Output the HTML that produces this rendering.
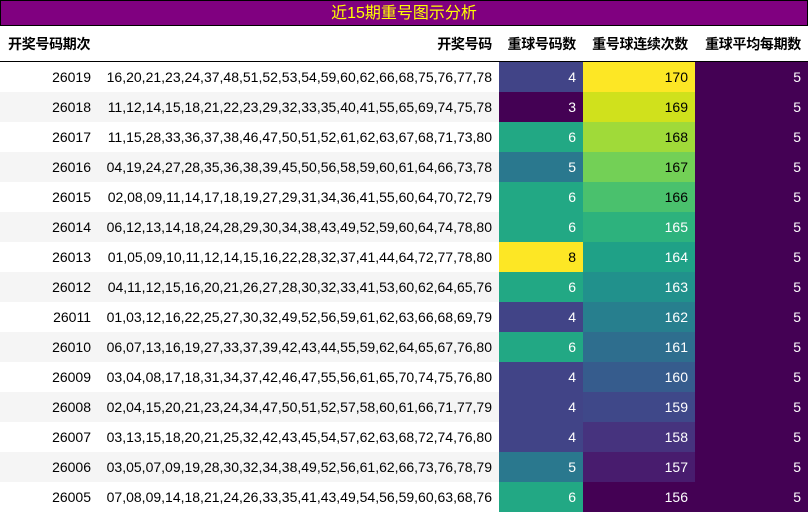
<!DOCTYPE html>
<html><head><meta charset="utf-8"><style>
body{margin:0;width:808px;height:513px;overflow:hidden;background:#fff;font-family:"Liberation Sans","Noto Sans CJK SC",sans-serif;font-size:14px}
.t{position:absolute;left:0;top:0;width:806px;height:24px;background:#800080;border:1px solid #000;color:#ffff00;font-size:16px;text-align:center;line-height:25px}
table{position:absolute;left:0;top:26px;border-collapse:collapse;width:808px;table-layout:fixed}
th{height:35px;font-weight:bold;padding:0 7px 0 0;text-align:right;border-bottom:1px solid #000;white-space:nowrap;overflow:hidden;font-size:14px;letter-spacing:-0.3px}
th:first-child{text-align:left;padding-left:8px}
td{height:30px;padding:0 7px 0 0;text-align:right;white-space:nowrap;overflow:hidden}
tr:nth-child(odd) td{background:#f5f5f5}
tr:nth-child(even) td{background:#fff}
.w{color:#fff}.k{color:#000}
</style></head><body>
<div class="t">近15期重号图示分析</div>
<table>
<colgroup><col style="width:98px"><col style="width:401px"><col style="width:84px"><col style="width:112px"><col style="width:113px"></colgroup>
<tr><th>开奖号码期次</th><th>开奖号码</th><th>重球号码数</th><th>重号球连续次数</th><th>重球平均每期数</th></tr>
<tr><td>26019</td><td>16,20,21,23,24,37,48,51,52,53,54,59,60,62,66,68,75,76,77,78</td><td class="w" style="background:#414487!important">4</td><td class="k" style="background:#fde725!important">170</td><td class="w" style="background:#440154!important">5</td></tr>
<tr><td>26018</td><td>11,12,14,15,18,21,22,23,29,32,33,35,40,41,55,65,69,74,75,78</td><td class="w" style="background:#440154!important">3</td><td class="k" style="background:#d0e11c!important">169</td><td class="w" style="background:#440154!important">5</td></tr>
<tr><td>26017</td><td>11,15,28,33,36,37,38,46,47,50,51,52,61,62,63,67,68,71,73,80</td><td class="w" style="background:#22a884!important">6</td><td class="k" style="background:#a0da39!important">168</td><td class="w" style="background:#440154!important">5</td></tr>
<tr><td>26016</td><td>04,19,24,27,28,35,36,38,39,45,50,56,58,59,60,61,64,66,73,78</td><td class="w" style="background:#2a788e!important">5</td><td class="k" style="background:#73d056!important">167</td><td class="w" style="background:#440154!important">5</td></tr>
<tr><td>26015</td><td>02,08,09,11,14,17,18,19,27,29,31,34,36,41,55,60,64,70,72,79</td><td class="w" style="background:#22a884!important">6</td><td class="k" style="background:#4ac16d!important">166</td><td class="w" style="background:#440154!important">5</td></tr>
<tr><td>26014</td><td>06,12,13,14,18,24,28,29,30,34,38,43,49,52,59,60,64,74,78,80</td><td class="w" style="background:#22a884!important">6</td><td class="w" style="background:#2db27d!important">165</td><td class="w" style="background:#440154!important">5</td></tr>
<tr><td>26013</td><td>01,05,09,10,11,12,14,15,16,22,28,32,37,41,44,64,72,77,78,80</td><td class="k" style="background:#fde725!important">8</td><td class="w" style="background:#1fa187!important">164</td><td class="w" style="background:#440154!important">5</td></tr>
<tr><td>26012</td><td>04,11,12,15,16,20,21,26,27,28,30,32,33,41,53,60,62,64,65,76</td><td class="w" style="background:#22a884!important">6</td><td class="w" style="background:#21918c!important">163</td><td class="w" style="background:#440154!important">5</td></tr>
<tr><td>26011</td><td>01,03,12,16,22,25,27,30,32,49,52,56,59,61,62,63,66,68,69,79</td><td class="w" style="background:#414487!important">4</td><td class="w" style="background:#277f8e!important">162</td><td class="w" style="background:#440154!important">5</td></tr>
<tr><td>26010</td><td>06,07,13,16,19,27,33,37,39,42,43,44,55,59,62,64,65,67,76,80</td><td class="w" style="background:#22a884!important">6</td><td class="w" style="background:#2e6e8e!important">161</td><td class="w" style="background:#440154!important">5</td></tr>
<tr><td>26009</td><td>03,04,08,17,18,31,34,37,42,46,47,55,56,61,65,70,74,75,76,80</td><td class="w" style="background:#414487!important">4</td><td class="w" style="background:#365c8d!important">160</td><td class="w" style="background:#440154!important">5</td></tr>
<tr><td>26008</td><td>02,04,15,20,21,23,24,34,47,50,51,52,57,58,60,61,66,71,77,79</td><td class="w" style="background:#414487!important">4</td><td class="w" style="background:#3f4889!important">159</td><td class="w" style="background:#440154!important">5</td></tr>
<tr><td>26007</td><td>03,13,15,18,20,21,25,32,42,43,45,54,57,62,63,68,72,74,76,80</td><td class="w" style="background:#414487!important">4</td><td class="w" style="background:#46337e!important">158</td><td class="w" style="background:#440154!important">5</td></tr>
<tr><td>26006</td><td>03,05,07,09,19,28,30,32,34,38,49,52,56,61,62,66,73,76,78,79</td><td class="w" style="background:#2a788e!important">5</td><td class="w" style="background:#481c6e!important">157</td><td class="w" style="background:#440154!important">5</td></tr>
<tr><td>26005</td><td>07,08,09,14,18,21,24,26,33,35,41,43,49,54,56,59,60,63,68,76</td><td class="w" style="background:#22a884!important">6</td><td class="w" style="background:#440154!important">156</td><td class="w" style="background:#440154!important">5</td></tr>
</table>
</body></html>
